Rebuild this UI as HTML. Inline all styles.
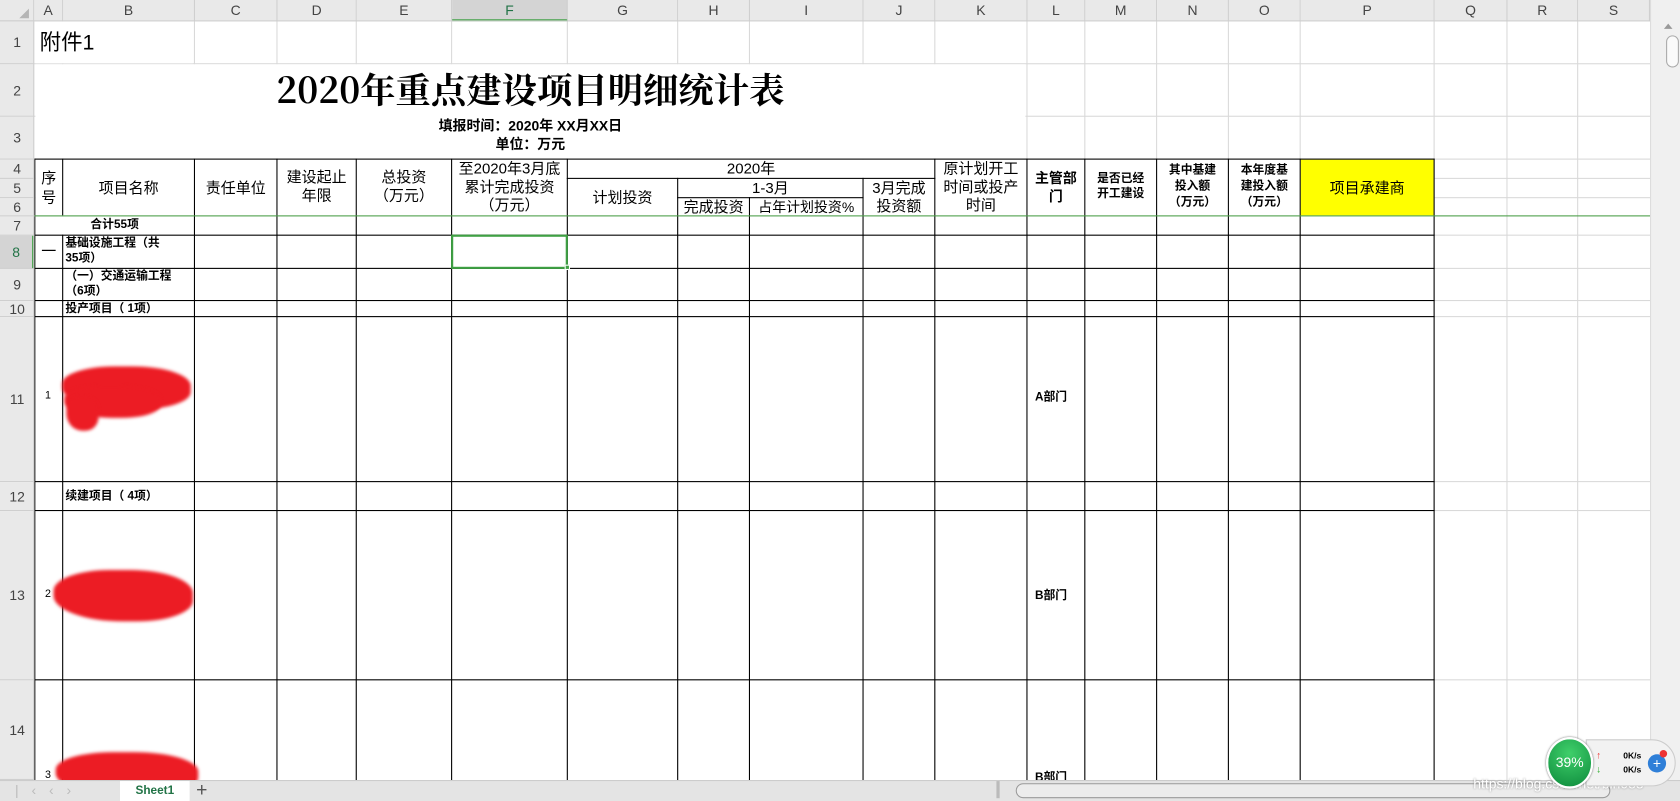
<!DOCTYPE html>
<html><head><meta charset="utf-8">
<style>
html,body{margin:0;padding:0;width:1680px;height:801px;overflow:hidden;background:#fff}
#w{position:absolute;left:0;top:0;width:1568px;height:748px;transform:scale(1.071429);transform-origin:0 0;font-family:"Liberation Sans","Noto Sans CJK SC",sans-serif;color:#000;overflow:hidden;background:#fff}
#w div{position:absolute;box-sizing:border-box}
.g{background:#d9d9d9}
.k{background:#000}
.wh{background:#fff}
.ch{top:0;height:20px;font-size:13px;color:#444;text-align:center;line-height:20px;border-right:1px solid #cfcfcf;background:#e9e9e9}
.rh{left:0;width:32px;font-size:13px;color:#444;text-align:center;border-bottom:1px solid #cfcfcf;background:#e9e9e9;display:flex;align-items:center;justify-content:center}
.t{text-align:center;font-size:14px;line-height:17px;white-space:nowrap}
.b{font-weight:bold;font-size:11px;line-height:14px;white-space:nowrap}
.blob{background:#ec1c24;border-radius:40% 45% 40% 50%;filter:blur(1.5px)}
</style></head><body><div id="w">

<div class="g" style="left:58px;top:20px;width:1px;height:708px"></div>
<div class="g" style="left:181px;top:20px;width:1px;height:708px"></div>
<div class="g" style="left:258px;top:20px;width:1px;height:708px"></div>
<div class="g" style="left:332px;top:20px;width:1px;height:708px"></div>
<div class="g" style="left:421px;top:20px;width:1px;height:708px"></div>
<div class="g" style="left:529px;top:20px;width:1px;height:708px"></div>
<div class="g" style="left:632px;top:20px;width:1px;height:708px"></div>
<div class="g" style="left:699px;top:20px;width:1px;height:708px"></div>
<div class="g" style="left:805px;top:20px;width:1px;height:708px"></div>
<div class="g" style="left:872px;top:20px;width:1px;height:708px"></div>
<div class="g" style="left:958px;top:20px;width:1px;height:708px"></div>
<div class="g" style="left:1012px;top:20px;width:1px;height:708px"></div>
<div class="g" style="left:1079px;top:20px;width:1px;height:708px"></div>
<div class="g" style="left:1146px;top:20px;width:1px;height:708px"></div>
<div class="g" style="left:1213px;top:20px;width:1px;height:708px"></div>
<div class="g" style="left:1338px;top:20px;width:1px;height:708px"></div>
<div class="g" style="left:1406px;top:20px;width:1px;height:708px"></div>
<div class="g" style="left:1472px;top:20px;width:1px;height:708px"></div>
<div class="g" style="left:32px;top:59px;width:1508px;height:1px"></div>
<div class="g" style="left:32px;top:108px;width:1508px;height:1px"></div>
<div class="g" style="left:32px;top:148px;width:1508px;height:1px"></div>
<div class="g" style="left:32px;top:166px;width:1508px;height:1px"></div>
<div class="g" style="left:32px;top:184px;width:1508px;height:1px"></div>
<div class="g" style="left:32px;top:219px;width:1508px;height:1px"></div>
<div class="g" style="left:32px;top:250px;width:1508px;height:1px"></div>
<div class="g" style="left:32px;top:280px;width:1508px;height:1px"></div>
<div class="g" style="left:32px;top:295px;width:1508px;height:1px"></div>
<div class="g" style="left:32px;top:449px;width:1508px;height:1px"></div>
<div class="g" style="left:32px;top:476px;width:1508px;height:1px"></div>
<div class="g" style="left:32px;top:634px;width:1508px;height:1px"></div>

<div class="wh" style="left:33px;top:20px;width:147px;height:39px"></div>
<div class="wh" style="left:33px;top:60px;width:924px;height:88px"></div>
<div class="wh" style="left:33px;top:149px;width:1304px;height:52px"></div>
<div class="wh" style="left:33px;top:202px;width:147px;height:17px"></div>
<div style="left:1214px;top:149px;width:124px;height:52px;background:#ffff00"></div>

<div class="k" style="left:32px;top:148px;width:1px;height:580px"></div>
<div class="k" style="left:58px;top:148px;width:1px;height:53px"></div>
<div class="k" style="left:58px;top:219px;width:1px;height:509px"></div>
<div class="k" style="left:181px;top:148px;width:1px;height:580px"></div>
<div class="k" style="left:258px;top:148px;width:1px;height:580px"></div>
<div class="k" style="left:332px;top:148px;width:1px;height:580px"></div>
<div class="k" style="left:421px;top:148px;width:1px;height:580px"></div>
<div class="k" style="left:529px;top:148px;width:1px;height:580px"></div>
<div class="k" style="left:632px;top:166px;width:1px;height:562px"></div>
<div class="k" style="left:699px;top:184px;width:1px;height:544px"></div>
<div class="k" style="left:805px;top:166px;width:1px;height:562px"></div>
<div class="k" style="left:872px;top:148px;width:1px;height:580px"></div>
<div class="k" style="left:958px;top:148px;width:1px;height:580px"></div>
<div class="k" style="left:1012px;top:148px;width:1px;height:580px"></div>
<div class="k" style="left:1079px;top:148px;width:1px;height:580px"></div>
<div class="k" style="left:1146px;top:148px;width:1px;height:580px"></div>
<div class="k" style="left:1213px;top:148px;width:1px;height:580px"></div>
<div class="k" style="left:1338px;top:148px;width:1px;height:580px"></div>
<div class="k" style="left:32px;top:148px;width:1307px;height:1px"></div>
<div class="k" style="left:529px;top:166px;width:344px;height:1px"></div>
<div class="k" style="left:632px;top:184px;width:174px;height:1px"></div>
<div class="k" style="left:32px;top:219px;width:1307px;height:1px"></div>
<div class="k" style="left:32px;top:250px;width:1307px;height:1px"></div>
<div class="k" style="left:32px;top:280px;width:1307px;height:1px"></div>
<div class="k" style="left:32px;top:295px;width:1307px;height:1px"></div>
<div class="k" style="left:32px;top:449px;width:1307px;height:1px"></div>
<div class="k" style="left:32px;top:476px;width:1307px;height:1px"></div>
<div class="k" style="left:32px;top:634px;width:1307px;height:1px"></div>
<div style="left:32px;top:201px;width:1508px;height:1px;background:#4a9e46"></div>
<div style="left:421px;top:219px;width:109px;height:32px;border:2px solid #3ea043"></div>
<div style="left:527px;top:247px;width:5px;height:5px;background:#3ea043;border:1px solid #fff"></div>

<div style="left:0;top:0;width:32px;height:20px;background:#e9e9e9;border-right:1px solid #cfcfcf;border-bottom:1px solid #cfcfcf"></div>
<div style="left:18px;top:8px;width:0;height:0;border-left:9px solid transparent;border-bottom:9px solid #b5b5b5"></div>
<div class="ch" style="left:32px;width:27px">A</div>
<div class="ch" style="left:59px;width:123px">B</div>
<div class="ch" style="left:182px;width:77px">C</div>
<div class="ch" style="left:259px;width:74px">D</div>
<div class="ch" style="left:333px;width:89px">E</div>
<div class="ch" style="left:422px;width:108px;background:#d4d4d4;color:#217346;border-bottom:2px solid #3ea043">F</div>
<div class="ch" style="left:530px;width:103px">G</div>
<div class="ch" style="left:633px;width:67px">H</div>
<div class="ch" style="left:700px;width:106px">I</div>
<div class="ch" style="left:806px;width:67px">J</div>
<div class="ch" style="left:873px;width:86px">K</div>
<div class="ch" style="left:959px;width:54px">L</div>
<div class="ch" style="left:1013px;width:67px">M</div>
<div class="ch" style="left:1080px;width:67px">N</div>
<div class="ch" style="left:1147px;width:67px">O</div>
<div class="ch" style="left:1214px;width:125px">P</div>
<div class="ch" style="left:1339px;width:68px">Q</div>
<div class="ch" style="left:1407px;width:66px">R</div>
<div class="ch" style="left:1473px;width:67px">S</div>
<div style="left:0;top:19px;width:1540px;height:1px;background:#cfcfcf"></div>

<div class="rh" style="top:20px;height:40px">1</div>
<div class="rh" style="top:60px;height:49px">2</div>
<div class="rh" style="top:109px;height:40px">3</div>
<div class="rh" style="top:149px;height:18px">4</div>
<div class="rh" style="top:167px;height:18px">5</div>
<div class="rh" style="top:185px;height:17px">6</div>
<div class="rh" style="top:202px;height:18px">7</div>
<div class="rh" style="top:220px;height:31px;background:#d4d4d4;color:#217346;border-right:2px solid #3ea043">8</div>
<div class="rh" style="top:251px;height:30px">9</div>
<div class="rh" style="top:281px;height:15px">10</div>
<div class="rh" style="top:296px;height:154px">11</div>
<div class="rh" style="top:450px;height:27px">12</div>
<div class="rh" style="top:477px;height:158px">13</div>
<div class="rh" style="top:635px;height:93px">14</div>
<div style="left:31px;top:20px;width:1px;height:708px;background:#cfcfcf"></div>

<div style="left:37px;top:28px;font-size:20px;line-height:24px">附件1</div>
<div style="left:190px;top:63px;width:610px;text-align:center;font-family:'Noto Serif CJK SC',serif;font-size:33px;line-height:40px;font-weight:bold">2020年重点建设项目明细统计表</div>
<div style="left:340px;top:109px;width:310px;text-align:center;font-weight:bold;font-size:13px;line-height:17px">填报时间：2020年 XX月XX日<br>单位：万元</div>

<div class="t" style="left:33px;top:157px;width:25px;line-height:18px">序<br>号</div>
<div class="t" style="left:59px;top:167px;width:122px">项目名称</div>
<div class="t" style="left:182px;top:167px;width:76px">责任单位</div>
<div class="t" style="left:259px;top:157px;width:73px">建设起止<br>年限</div>
<div class="t" style="left:333px;top:157px;width:88px">总投资<br>（万元）</div>
<div class="t" style="left:422px;top:149px;width:107px">至2020年3月底<br>累计完成投资<br>（万元）</div>
<div class="t" style="left:530px;top:149px;width:342px">2020年</div>
<div class="t" style="left:530px;top:176px;width:102px">计划投资</div>
<div class="t" style="left:633px;top:167px;width:172px">1-3月</div>
<div class="t" style="left:633px;top:185px;width:66px">完成投资</div>
<div class="t" style="left:700px;top:185px;width:105px;font-size:13px">占年计划投资%</div>
<div class="t" style="left:806px;top:167px;width:66px">3月完成<br>投资额</div>
<div class="t" style="left:873px;top:149px;width:85px">原计划开工<br>时间或投产<br>时间</div>
<div class="t" style="left:959px;top:158px;width:53px;font-weight:bold;font-size:13px">主管部<br>门</div>
<div class="b" style="left:1013px;top:160px;width:66px;text-align:center">是否已经<br>开工建设</div>
<div class="b" style="left:1080px;top:152px;width:66px;text-align:center;line-height:15px">其中基建<br>投入额<br>（万元）</div>
<div class="b" style="left:1147px;top:152px;width:66px;text-align:center;line-height:15px">本年度基<br>建投入额<br>（万元）</div>
<div class="t" style="left:1214px;top:167px;width:124px">项目承建商</div>

<div class="b" style="left:33px;top:203px;width:148px;text-align:center">合计55项</div>
<div class="t" style="left:33px;top:226px;width:25px">一</div>
<div class="b" style="left:61px;top:220px">基础设施工程（共<br>35项）</div>
<div class="b" style="left:61px;top:251px">（一）交通运输工程<br>（6项）</div>
<div class="b" style="left:61px;top:281px">投产项目（ 1项）</div>
<div class="b" style="left:61px;top:456px">续建项目（ 4项）</div>
<div style="left:42px;top:364px;font-size:10px">1</div>
<div style="left:42px;top:549px;font-size:10px">2</div>
<div style="left:42px;top:718px;font-size:10px">3</div>
<div class="b" style="left:966px;top:364px">A部门</div>
<div class="b" style="left:966px;top:549px">B部门</div>
<div class="b" style="left:966px;top:719px">B部门</div>

<div class="blob" style="left:58px;top:342px;width:120px;height:40px"></div>
<div class="blob" style="left:60px;top:360px;width:90px;height:30px"></div>
<div class="blob" style="left:62px;top:370px;width:30px;height:32px"></div>
<div class="blob" style="left:50px;top:532px;width:130px;height:48px"></div>
<div class="blob" style="left:52px;top:702px;width:133px;height:40px"></div>

<div style="left:1540px;top:0;width:28px;height:728px;background:#f0f0f0;border-left:1px solid #ddd"></div>
<div style="left:1555px;top:33px;width:12px;height:30px;border:1px solid #aaa;border-radius:6px;background:#fafafa"></div>
<div style="left:1553px;top:22px;width:0;height:0;border-left:4px solid transparent;border-right:4px solid transparent;border-bottom:5px solid #999"></div>

<div style="left:0;top:728px;width:1568px;height:20px;background:#e4e4e4;border-top:1px solid #ccc"></div>
<div style="left:14px;top:730px;font-size:13px;color:#bbb;letter-spacing:12px">|‹‹›</div>
<div style="left:112px;top:729px;width:65px;height:19px;background:#fff;font-size:11px;color:#217346;text-align:center;line-height:19px;font-weight:bold">Sheet1</div>
<div style="left:183px;top:727px;font-size:18px;color:#555;line-height:20px">+</div>
<div style="left:930px;top:729px;width:3px;height:16px;background:#bbb"></div>
<div style="left:948px;top:731px;width:555px;height:14px;border:1px solid #999;border-radius:7px;background:#ececec"></div>
<div style="left:1375px;top:724px;font-size:13px;color:#fff;text-shadow:0 0 2px #888">https://blog.csdn.net/bin083</div>

<div style="left:1480px;top:690px;width:84px;height:44px;background:#f2f2f2;border:1px solid #ccc;border-radius:0 22px 22px 0"></div>
<div style="left:1443px;top:688px;width:44px;height:48px;border-radius:50%;background:radial-gradient(circle at 50% 30%,#3fcf6a,#0d8a3c);border:2px solid #fff;box-shadow:0 0 2px #666;color:#fff;font-size:13px;text-align:center;line-height:44px">39%</div>
<div style="left:1490px;top:700px;font-size:9px;color:#e33">↑</div>
<div style="left:1490px;top:713px;font-size:9px;color:#2a2">↓</div>
<div style="left:1515px;top:701px;font-size:8px;font-weight:bold">0K/s</div>
<div style="left:1515px;top:714px;font-size:8px;font-weight:bold">0K/s</div>
<div style="left:1538px;top:704px;width:17px;height:17px;border-radius:50%;background:#2f7fd8;color:#fff;font-size:13px;line-height:17px;text-align:center">+</div>
<div style="left:1549px;top:700px;width:7px;height:7px;border-radius:50%;background:#e33"></div>
</div></body></html>
